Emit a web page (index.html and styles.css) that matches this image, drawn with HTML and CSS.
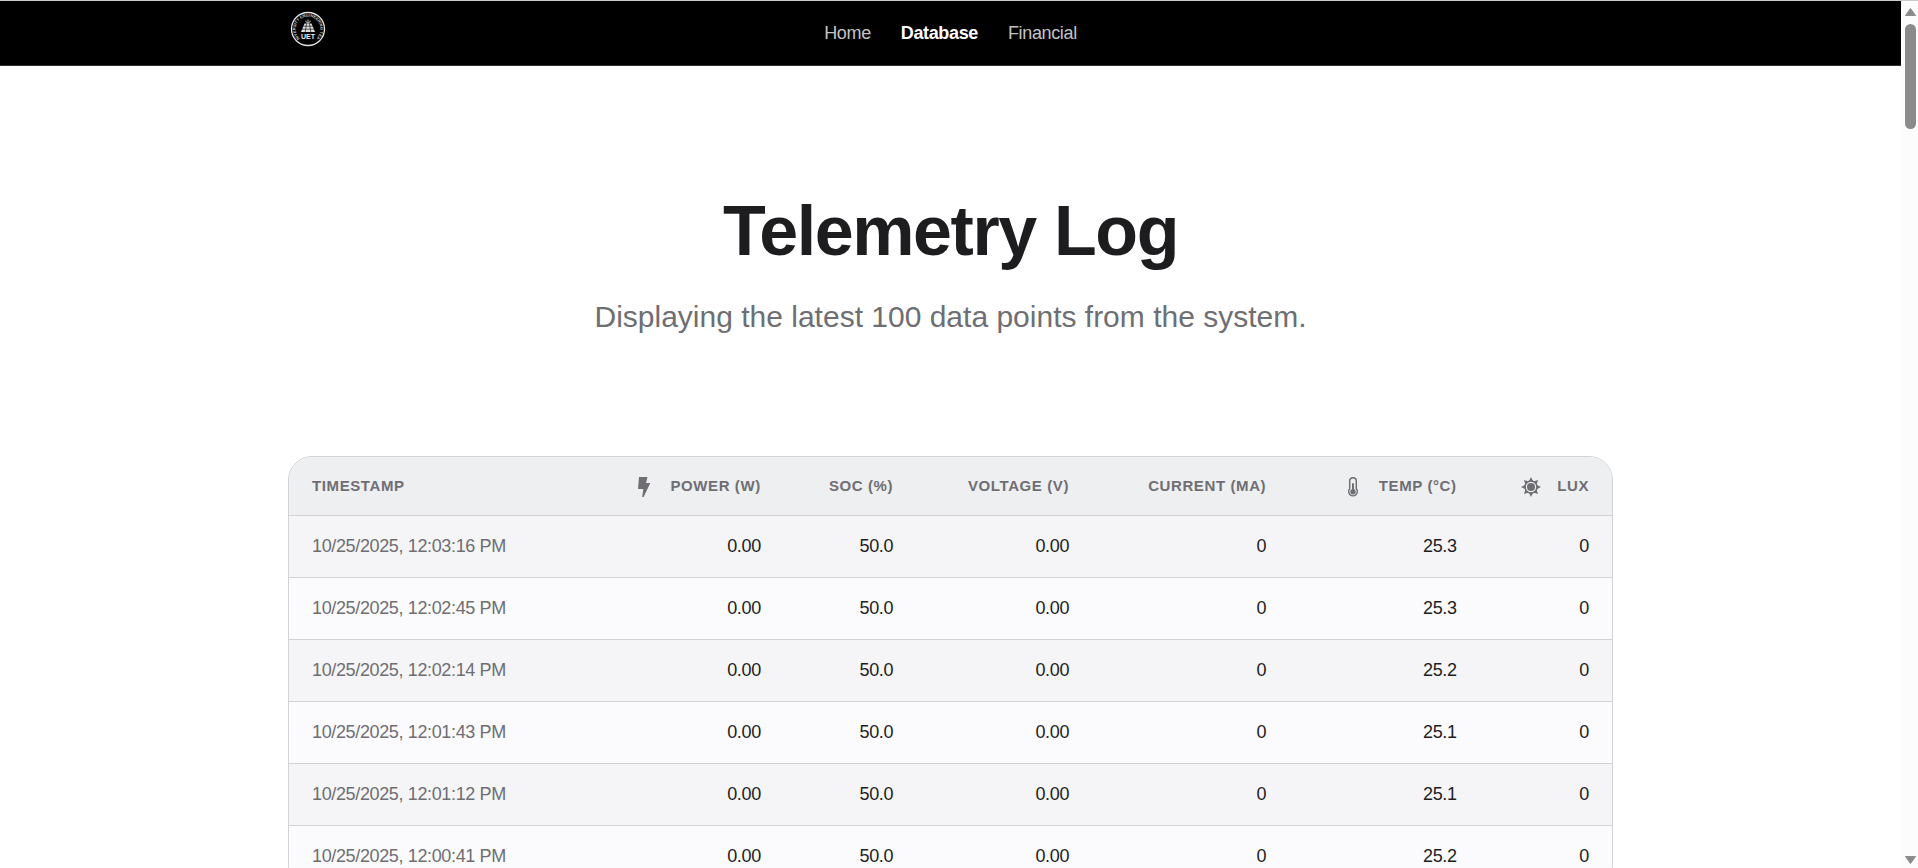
FILE: index.html
```html
<!DOCTYPE html>
<html lang="en">
<head>
<meta charset="utf-8">
<title>Telemetry Log</title>
<link rel="stylesheet" href="styles.css">
</head>
<body>
<div class="window">
  <div class="page">
    <header class="navbar">
      <div class="container navbar-inner">
        <a class="logo" href="#" aria-label="UET home">
          <svg viewBox="0 0 36 36" width="36" height="36">
            <defs><path id="ring" d="M9.200 26.800A12.400 12.400 0 1 1 26.800 26.800"/></defs>
            <circle cx="18" cy="18" r="16.500" fill="none" stroke="#e4e4e4" stroke-width="1.300"/>
            <text class="logo-ring"><textPath href="#ring" startOffset="50%" text-anchor="middle">UNIVERSITY ENGINEERING TEAM</textPath></text>
            <path d="M14.500 12.500h7l3.500 8.500H11z" fill="#dedede"/>
            <path d="M13 15.200h10M12 18.200h12M16.600 12.500l-1.400 8.500M19.400 12.500l1.400 8.500" stroke="#000" stroke-width=".6" fill="none"/>
            <path d="M18 8.500v4M15.800 9.500v1.200l2.200 1.300 2.200-1.300V9.500" stroke="#ccc" stroke-width=".9" fill="none"/>
            <text class="logo-name" x="18" y="28" text-anchor="middle">UET</text>
          </svg>
        </a>
        <nav class="nav-links">
          <a href="#">Home</a>
          <a class="active" href="#" aria-current="page">Database</a>
          <a href="#">Financial</a>
        </nav>
      </div>
    </header>

    <main class="container">
      <section class="hero">
        <h1>Telemetry Log</h1>
        <p>Displaying the latest 100 data points from the system.</p>
      </section>

      <div class="table-card">
        <table>
          <colgroup>
            <col class="col-time"><col class="col-power"><col class="col-soc"><col class="col-voltage"><col class="col-current"><col class="col-temp"><col class="col-lux">
          </colgroup>
          <thead>
            <tr>
              <th scope="col">Timestamp</th>
              <th scope="col"><span class="head"><svg viewBox="0 0 20 20" width="20" height="20"><path fill="currentColor" d="M5 0h8.500l-1.500 6H16.300L9.600 20H8.200L9.300 12H4z"/></svg>Power (W)</span></th>
              <th scope="col">SoC (%)</th>
              <th scope="col">Voltage (V)</th>
              <th scope="col">Current (mA)</th>
              <th scope="col"><span class="head"><svg viewBox="0 0 20 20" width="20" height="20"><path fill="none" stroke="currentColor" stroke-width="1.500" d="M6.700 4a3.300 3.300 0 0 1 6.600 0v7.800a4.300 4.300 0 1 1-6.600 0z"/><circle cx="10" cy="14.700" r="2.700" fill="currentColor"/><path stroke="currentColor" stroke-width="2" stroke-linecap="round" d="M10 7v7"/></svg>Temp (°C)</span></th>
              <th scope="col"><span class="head"><svg viewBox="0 0 20 20" width="20" height="20"><circle cx="10" cy="10" r="4" fill="currentColor"/><circle cx="10" cy="10" r="6" fill="none" stroke="currentColor" stroke-width="1.500"/><path fill="currentColor" d="M10 0l2.200 4.500H7.800zM10 20l2.200-4.500H7.800zM0 10l4.500-2.200v4.400zM20 10l-4.500-2.200v4.400zM2.900 2.900l4.800 1.700-3.100 3.100zM17.100 2.900l-4.800 1.700 3.100 3.100zM2.900 17.100l4.800-1.700-3.100-3.100zM17.100 17.100l-4.800-1.700 3.100-3.100z"/></svg>Lux</span></th>
            </tr>
          </thead>
          <tbody>
            <tr><td>10/25/2025, 12:03:16 PM</td><td>0.00</td><td>50.0</td><td>0.00</td><td>0</td><td>25.3</td><td>0</td></tr>
            <tr><td>10/25/2025, 12:02:45 PM</td><td>0.00</td><td>50.0</td><td>0.00</td><td>0</td><td>25.3</td><td>0</td></tr>
            <tr><td>10/25/2025, 12:02:14 PM</td><td>0.00</td><td>50.0</td><td>0.00</td><td>0</td><td>25.2</td><td>0</td></tr>
            <tr><td>10/25/2025, 12:01:43 PM</td><td>0.00</td><td>50.0</td><td>0.00</td><td>0</td><td>25.1</td><td>0</td></tr>
            <tr><td>10/25/2025, 12:01:12 PM</td><td>0.00</td><td>50.0</td><td>0.00</td><td>0</td><td>25.1</td><td>0</td></tr>
            <tr><td>10/25/2025, 12:00:41 PM</td><td>0.00</td><td>50.0</td><td>0.00</td><td>0</td><td>25.2</td><td>0</td></tr>
          </tbody>
        </table>
      </div>
    </main>
  </div>

  <div class="scrollbar" aria-hidden="true">
    <svg viewBox="0 0 13 10" width="13" height="10"><path d="M6.500 1.500L11.500 8.500H1.500z"/></svg>
    <div class="track"><div class="thumb"></div></div>
    <svg viewBox="0 0 13 10" width="13" height="10"><path d="M6.500 8.500L11.500 1.500H1.500z"/></svg>
  </div>
</div>
</body>
</html>
```
FILE: styles.css
```css
* { box-sizing: border-box; }

body {
  margin: 0;
  background: #fff;
  color: #1d1d1f;
  font-family: "Liberation Sans", Arial, sans-serif;
  font-size: 18px;
  letter-spacing: -0.02em;
}

.window {
  display: flex;
  height: 100vh;
  border-top: 1px solid #c8cccb;
  overflow: hidden;
}

.page {
  flex: 1;
  min-width: 0;
  overflow: hidden;
}

.container {
  width: calc(100% - 48px);
  max-width: 1325px;
  margin: 0 auto;
}

.navbar {
  background: #000;
  border-bottom: 1px solid #333336;
}

.navbar-inner {
  display: grid;
  grid-template-columns: 1fr auto 1fr;
  align-items: center;
  height: 64px;
}

.logo {
  justify-self: start;
  align-self: start;
  padding: 10px 2px;
}

.logo svg { display: block; }

.logo-ring {
  fill: #ccc;
  font-size: 4px;
  font-weight: bold;
  letter-spacing: 0;
}

.logo-name {
  fill: #eee;
  font-size: 7px;
  font-weight: bold;
  letter-spacing: 0;
}

.nav-links {
  display: flex;
  gap: 30px;
}

.nav-links a {
  color: #c4c4c6;
  text-decoration: none;
}

.nav-links .active {
  color: #fff;
  font-weight: bold;
}

.hero {
  padding: 123px 0 120px;
  text-align: center;
}

.hero h1 {
  margin: 0;
  font-size: 70px;
  line-height: 84px;
  letter-spacing: -0.02em;
}

.hero p {
  margin: 25px 0 0;
  color: #6e6e73;
  font-size: 30px;
  line-height: 38px;
  letter-spacing: 0;
}

.table-card {
  border: 1px solid #d2d2d7;
  border-radius: 24px;
  overflow: hidden;
}

table {
  width: 100%;
  table-layout: fixed;
  border-collapse: separate;
  border-spacing: 0;
}

.col-time { width: 21.2%; }
.col-power { width: 16.2%; }
.col-soc { width: 10%; }
.col-voltage { width: 13.3%; }
.col-current { width: 14.9%; }
.col-temp { width: 14.4%; }
.col-lux { width: 10%; }

th,
td {
  border-bottom: 1px solid #d2d2d7;
  text-align: right;
  white-space: nowrap;
}

th:first-child,
td:first-child {
  color: #6e6e73;
  text-align: left;
}

th {
  padding: 18px 23px;
  background: #eeeff1;
  color: #6e6e73;
  font-size: 15px;
  line-height: 22px;
  letter-spacing: 0.04em;
  text-transform: uppercase;
}

.head {
  display: inline-flex;
  gap: 16px;
  vertical-align: top;
}

.head svg { margin-top: 2px; }

td {
  padding: 20px 23px;
  line-height: 21px;
}

tbody tr:nth-child(odd) { background: #f5f5f7; }
tbody tr:nth-child(even) { background: #fbfbfd; }

.scrollbar {
  display: flex;
  flex-direction: column;
  align-items: center;
  gap: 7px;
  width: 17px;
  padding: 6px 0 3px 2px;
  background: #fcfcfc;
}

.scrollbar svg {
  fill: #8b8b8b;
  stroke: #8b8b8b;
  stroke-linejoin: round;
}

.track {
  flex: 1;
  width: 11px;
}

.thumb {
  height: 12.7%;
  min-height: 24px;
  border-radius: 6px;
  background: #8b8b8b;
}
```
